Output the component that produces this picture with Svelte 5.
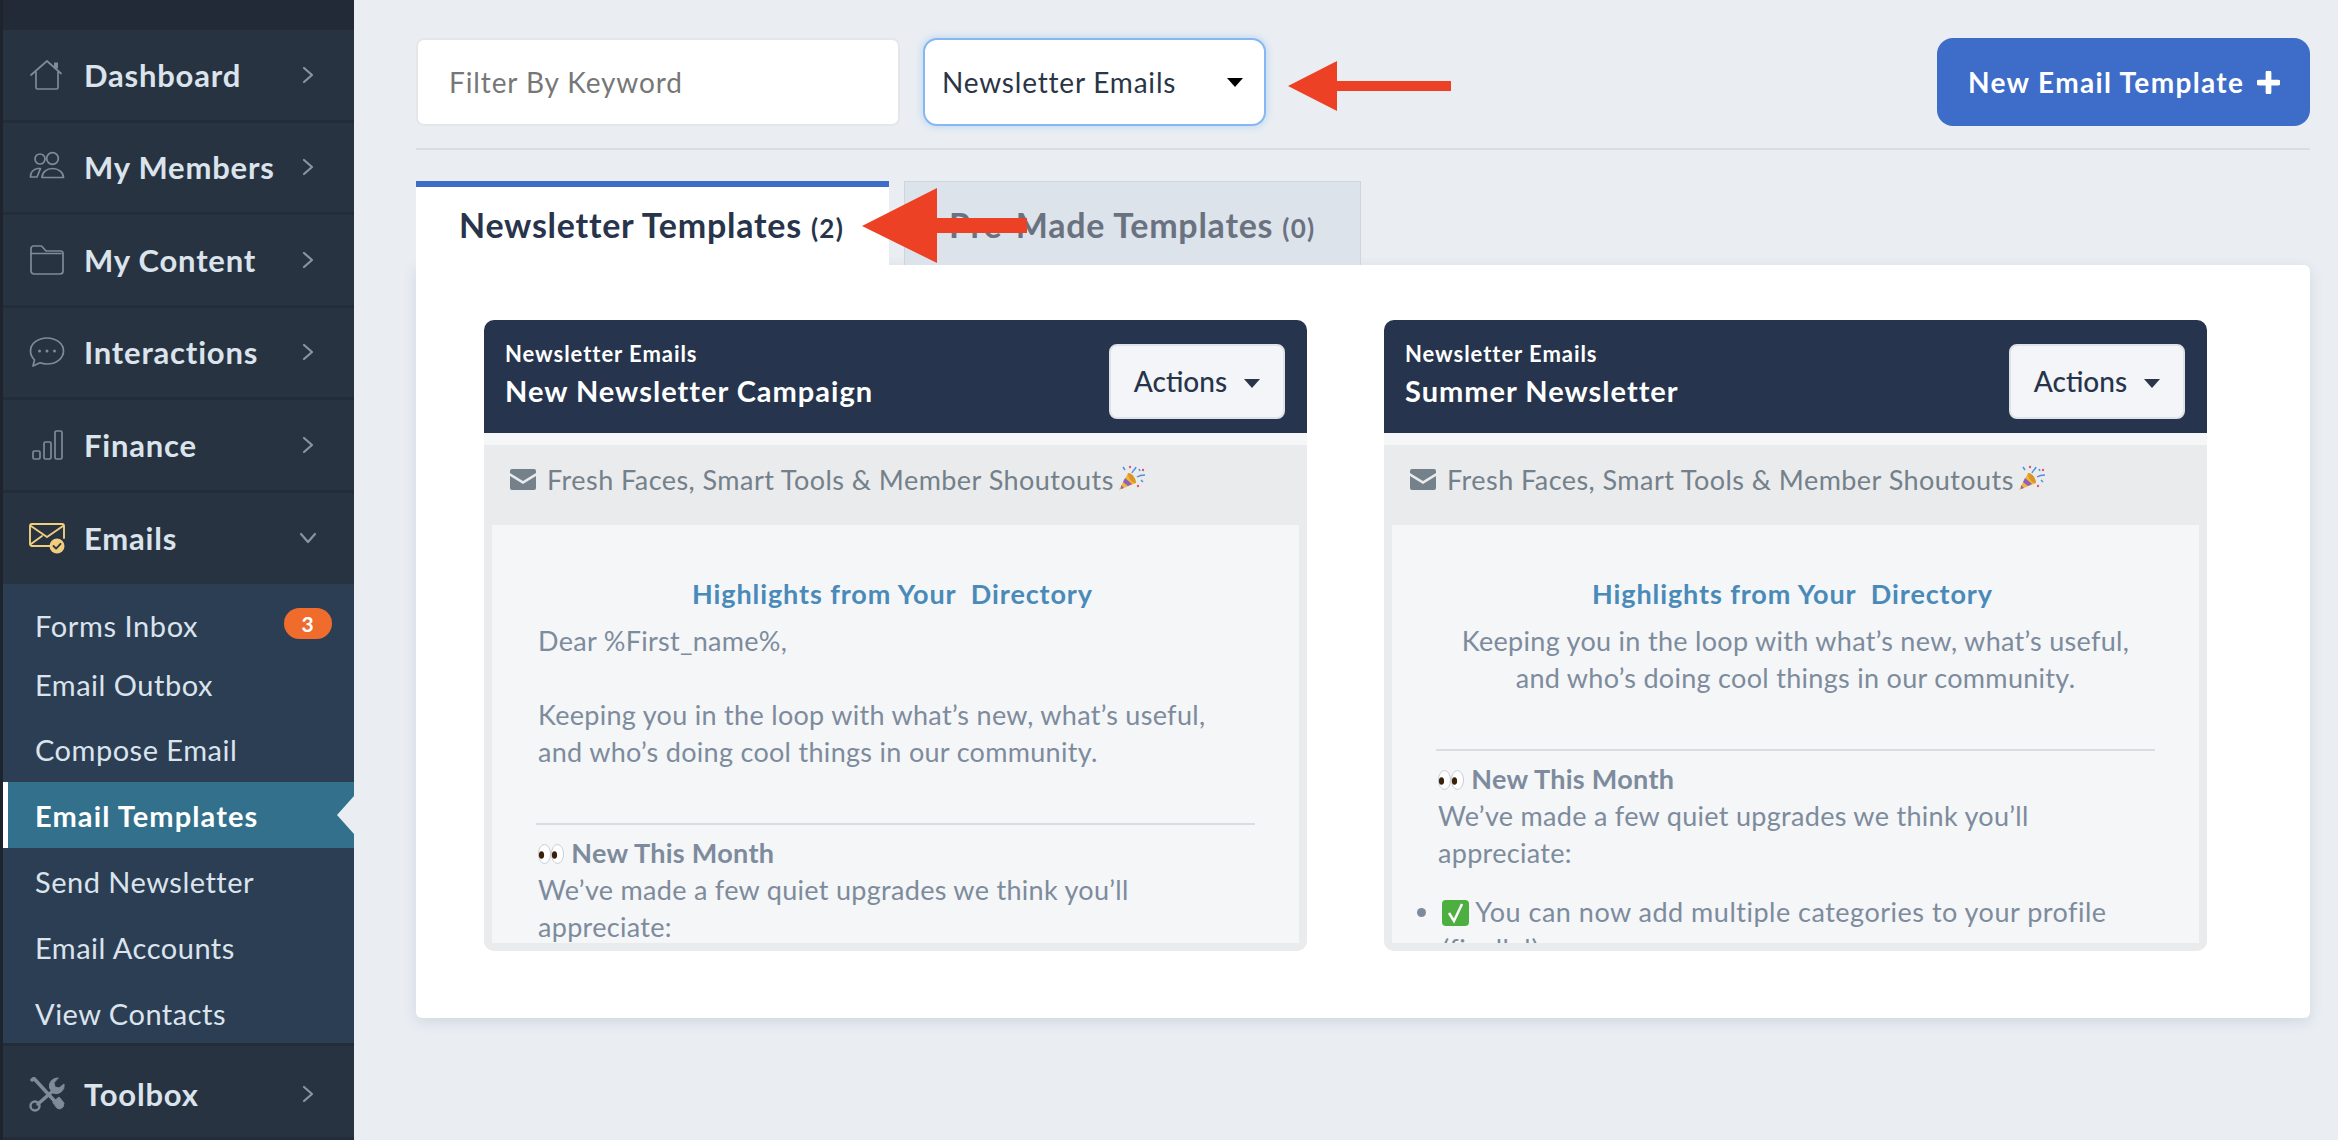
<script>
	const nav = [
		{ label: 'Dashboard', icon: 'home' },
		{ label: 'My Members', icon: 'users' },
		{ label: 'My Content', icon: 'folder' },
		{ label: 'Interactions', icon: 'chat' },
		{ label: 'Finance', icon: 'bars' }
	];
	const sub = ['Email Outbox', 'Compose Email', 'Email Templates', 'Send Newsletter', 'Email Accounts', 'View Contacts'];
	const cards = [
		{ title: 'New Newsletter Campaign', greeting: true },
		{ title: 'Summer Newsletter', greeting: false }
	];
</script>

{#snippet navIcon(name)}
	<svg class="nav-icon" viewBox="0 0 36 32" fill="none" stroke="#7f8b99" stroke-width="1.7" stroke-linecap="round" stroke-linejoin="round">
		{#if name === 'home'}
			<path d="M2 16 18 2l14 12.5" />
			<path d="M7 13v15.5a1.5 1.5 0 0 0 1.5 1.5h19a1.5 1.5 0 0 0 1.5-1.5V13" />
			<path d="M27 3.5v6" stroke-width="4" stroke-linecap="butt" />
		{:else if name === 'users'}
			<circle cx="11" cy="8" r="5" />
			<circle cx="23.5" cy="7.5" r="5.8" />
			<path d="M1.5 26c0-4 2.2-7.5 7-8.5h3L8 26z" />
			<path d="M13 26.5c0-5 4.5-9 10.5-9S34.5 21.5 34.5 26.5z" />
		{:else if name === 'folder'}
			<path d="M2 27V4.5A2.5 2.5 0 0 1 4.5 2h8l4.5 5h15A2.5 2.5 0 0 1 34 9.5V27a3 3 0 0 1-3 3H5a3 3 0 0 1-3-3z" />
			<path d="M2 9.5h30" />
		{:else if name === 'chat'}
			<path d="M18 2c9 0 16.5 5.5 16.5 13S27 28 18 28c-2.5 0-4.8-.3-7-1.2L4 30l1.5-6C3 21.5 1.5 18.5 1.5 15 1.5 7.5 9 2 18 2z" />
			<g fill="#7f8b99" stroke="none"><circle cx="10.5" cy="15" r="1.5" /><circle cx="18" cy="15" r="1.5" /><circle cx="25.5" cy="15" r="1.5" /></g>
		{:else if name === 'bars'}
			<rect x="4" y="22" width="7" height="8" rx="1.5" />
			<rect x="15" y="13" width="7" height="17" rx="1.5" />
			<rect x="26" y="2" width="7" height="28" rx="1.5" />
		{/if}
	</svg>
{/snippet}

{#snippet chevron()}
	<svg class="chev" viewBox="0 0 12 18" fill="none" stroke="#8a95a2" stroke-width="2.2" stroke-linecap="round" stroke-linejoin="round"><path d="M2 2l8 7-8 7" /></svg>
{/snippet}

{#snippet eyes()}
	<svg class="emoji eyes" viewBox="0 0 26 20">
		<ellipse cx="6.5" cy="10" rx="6" ry="9.5" fill="#fff" stroke="#c9ced4" />
		<ellipse cx="19.5" cy="10" rx="6" ry="9.5" fill="#fff" stroke="#c9ced4" />
		<ellipse cx="3.5" cy="11" rx="2.6" ry="3.8" fill="#3a2208" />
		<ellipse cx="16.5" cy="11" rx="2.6" ry="3.8" fill="#3a2208" />
	</svg>
{/snippet}

<div class="page">
	<aside class="sidebar">
		<div class="top"></div>
		{#each nav as item}
			<div class="nav-row">
				{@render navIcon(item.icon)}
				<span class="nav-label">{item.label}</span>
				{@render chevron()}
			</div>
		{/each}
		<div class="nav-row open">
			<svg class="nav-icon" viewBox="0 0 36 32" fill="none" stroke="#f1cd7e" stroke-width="1.9" stroke-linecap="round" stroke-linejoin="round">
				<path d="M24 24H3a2 2 0 0 1-2-2V4a2 2 0 0 1 2-2h30a2 2 0 0 1 2 2v12" />
				<path d="M2 4l16 11L34 4M2 22l11-8" />
				<circle cx="28" cy="24" r="7.5" fill="#f1cd7e" stroke="none" />
				<path d="M24.5 24l2.6 2.6 4.4-4.8" stroke="#2a3644" stroke-width="1.8" />
			</svg>
			<span class="nav-label">Emails</span>
			<svg class="chev down" viewBox="0 0 18 12" fill="none" stroke="#8a95a2" stroke-width="2.2" stroke-linecap="round" stroke-linejoin="round"><path d="M2 2l7 8 7-8" /></svg>
		</div>
		<div class="submenu">
			<div class="sub-first">
				<span>Forms Inbox</span>
				<span class="badge">3</span>
			</div>
			{#each sub as label}
				<div class="sub-item" class:active={label === 'Email Templates'}>{label}</div>
			{/each}
		</div>
		<div class="nav-row last">
			<svg class="nav-icon tools" viewBox="0 0 36 35" fill="none" stroke="#7f8b99" stroke-linecap="round" stroke-linejoin="round">
				<path d="M3 3l2-1.5 21 23" stroke-width="3.5" />
				<path d="M24 25l6-5 5 6-1 4-3 2-3-1z" fill="#7f8b99" stroke-width="1" />
				<path d="M25 13 9 27" stroke-width="3.5" />
				<circle cx="6" cy="29" r="4.5" stroke-width="2.4" />
				<path d="M29 1a8 8 0 0 0-8 11l3 4a8 8 0 0 0 11-9l-5 4-4-1-1-4z" fill="#7f8b99" stroke-width="1" />
			</svg>
			<span class="nav-label">Toolbox</span>
			{@render chevron()}
		</div>
	</aside>

	<main class="main">
		<div class="toolbar">
			<div class="filter">Filter By Keyword</div>
			<div class="select">
				<span>Newsletter Emails</span>
				<i class="caret"></i>
			</div>
			<button class="new-btn">
				New Email Template
				<svg viewBox="0 0 24 24" width="23" height="23"><path d="M12 2v20M2 12h20" stroke="#fff" stroke-width="6" stroke-linecap="round" /></svg>
			</button>
		</div>
		<div class="divider"></div>

		<div class="tabs">
			<div class="tab active">Newsletter Templates <small>(2)</small></div>
			<div class="tab">Pre-Made Templates <small>(0)</small></div>
		</div>

		<section class="panel">
			{#each cards as card}
				<article class="card">
					<header class="card-head">
						<div class="head-text">
							<div class="kind">Newsletter Emails</div>
							<div class="title">{card.title}</div>
						</div>
						<button class="actions">Actions <i class="caret small"></i></button>
					</header>
					<div class="subject">
						<svg class="mail" viewBox="0 0 26 21"><path d="M2 0h22a2 2 0 0 1 2 2v2L13 12 0 4V2a2 2 0 0 1 2-2z" fill="#74808a" /><path d="M0 7l13 8 13-8v12a2 2 0 0 1-2 2H2a2 2 0 0 1-2-2z" fill="#74808a" /></svg>
						<span>Fresh Faces, Smart Tools &amp; Member Shoutouts</span>
						<svg class="emoji popper" viewBox="0 0 27 26">
							<path d="M10 8 1 25l17-7z" fill="#f2b632" />
							<path d="M7 13l7 6-4 2-5-4zM3 20l3 3-3 1z" fill="#8c5fc4" />
							<path d="M10 8c4 0 8 5 8 10-4 0-8-5-8-10z" fill="#d9942a" />
							<path d="M14 8c1-3 3-3 4-6M19 12c3-2 5-2 8-2M5 2l2 3M21 4l1 2M23 15l2 2" fill="none" stroke="#4f8fe0" stroke-width="1.5" />
							<circle cx="12" cy="2" r="1.2" fill="#e0567a" /><circle cx="25" cy="5" r="1.2" fill="#e0567a" /><circle cx="20" cy="21" r="1.2" fill="#e0567a" />
						</svg>
					</div>
					<div class="body">
						<div class="email">
							<h4>Highlights from Your &nbsp;Directory</h4>
							{#if card.greeting}
								<p class="copy">Dear %First_name%,<br /><br />Keeping you in the loop with what’s new, what’s useful,<br />and who’s doing cool things in our community.</p>
							{:else}
								<p class="copy mid">Keeping you in the loop with what’s new, what’s useful,<br />and who’s doing cool things in our community.</p>
							{/if}
							<hr />
							<p class="copy">{@render eyes()} <strong>New This Month</strong><br />We’ve made a few quiet upgrades we think you’ll<br />appreciate:</p>
							{#if !card.greeting}
								<ul>
									<li>
										<svg class="emoji check" viewBox="0 0 27 26"><rect width="27" height="26" rx="4" fill="#4caf3f" /><path d="M7 13l5 8 8-17" fill="none" stroke="#fff" stroke-width="2.5" /></svg>
										You can now add multiple categories to your profile<br />(finally!)
									</li>
								</ul>
							{/if}
						</div>
					</div>
				</article>
			{/each}
		</section>

		<svg class="arrow one" viewBox="0 0 163 50"><path d="M0 25 49 0v20h114v10H49v20z" fill="#ec4125" /></svg>
		<svg class="arrow two" viewBox="0 0 165 75"><path d="M0 38 75 0v30h90v15H75v30z" fill="#ec4125" /></svg>
	</main>
</div>

<style>
	:global(body) {
		background: #eaeef3;
	}

	.page {
		display: flex;
		height: 1140px;
		overflow: hidden;
		font-family: Lato, 'Noto Sans', sans-serif;
	}

	.sidebar {
		flex: 0 0 354px;
		box-sizing: border-box;
		border-left: 3px solid #1d242e;
		background: #283341;
		color: #dbe4ec;
	}

	.top {
		height: 30px;
		background: #222a37;
	}

	.nav-row {
		box-sizing: border-box;
		display: flex;
		align-items: center;
		height: 92.5px;
		padding-left: 26px;
		border-bottom: 3px solid #232c39;
	}

	.nav-row.open {
		height: 91.5px;
		border-bottom: 0;
	}

	.nav-row.last {
		height: 94px;
		padding-top: 5px;
	}

	.nav-icon {
		flex: 0 0 36px;
		height: 32px;
	}

	.nav-icon.tools {
		height: 35px;
	}

	.nav-label {
		margin-left: 19px;
		font-size: 31px;
		font-weight: 700;
		letter-spacing: 0.8px;
	}

	.chev {
		width: 12px;
		height: 18px;
		margin-left: auto;
		margin-right: 40px;
	}

	.chev.down {
		width: 18px;
		height: 12px;
		margin-right: 37px;
	}

	.submenu {
		box-sizing: border-box;
		height: 462px;
		padding-top: 20px;
		background: #2c3e54;
		border-bottom: 3px solid #232c39;
		font-size: 29px;
		color: #dbe4ec;
	}

	.sub-first {
		display: flex;
		justify-content: space-between;
		align-items: center;
		height: 43px;
		margin-bottom: 13px;
		padding: 0 22px 0 32px;
		letter-spacing: 0.6px;
	}

	.badge {
		display: flex;
		align-items: center;
		justify-content: center;
		width: 48px;
		height: 31px;
		margin-top: -4px;
		border-radius: 16px;
		background: #ef6c2c;
		color: #fff;
		font-size: 21px;
		font-weight: 700;
	}

	.sub-item {
		display: flex;
		align-items: center;
		height: 66px;
		padding-left: 32px;
		letter-spacing: 0.5px;
	}

	.sub-first + .sub-item {
		height: 48px;
		margin-bottom: 8px;
	}

	.sub-item.active {
		position: relative;
		padding-left: 27px;
		border-left: 5px solid #fff;
		background: #33708c;
		color: #fff;
		font-weight: 700;
		letter-spacing: 1.1px;
	}

	.sub-item.active::after {
		content: '';
		position: absolute;
		right: 0;
		top: 14px;
		border-style: solid;
		border-width: 19px 17px 19px 0;
		border-color: transparent #eaeef3 transparent transparent;
	}

	.main {
		position: relative;
		flex: 1;
		box-sizing: border-box;
		padding: 38px 28px 0 62px;
	}

	.toolbar {
		display: flex;
		height: 88px;
		gap: 23px;
		font-size: 28px;
	}

	.filter {
		box-sizing: border-box;
		width: 484px;
		padding-left: 31px;
		border: 2px solid #e4e6ea;
		border-radius: 8px;
		background: #fff;
		color: #777;
		line-height: 84px;
		letter-spacing: 0.9px;
	}

	.select {
		box-sizing: border-box;
		display: flex;
		align-items: center;
		justify-content: space-between;
		width: 343px;
		padding: 0 21px 0 17px;
		border: 2px solid #86b7f0;
		border-radius: 14px;
		background: #fff;
		box-shadow: 0 0 6px 2px rgba(134, 183, 240, 0.35);
		color: #2a3547;
		letter-spacing: 0.8px;
	}

	.caret {
		display: block;
		width: 0;
		height: 0;
		border-style: solid;
		border-width: 9px 8.5px 0;
		border-color: #000 transparent transparent;
	}

	.caret.small {
		display: inline-block;
		margin-left: 10px;
		vertical-align: 4px;
		border-width: 9px 8px 0;
		border-color: #2a3547 transparent transparent;
	}

	.new-btn {
		display: flex;
		align-items: center;
		gap: 13px;
		box-sizing: border-box;
		width: 373px;
		margin-left: auto;
		padding: 0 0 0 31px;
		border: 0;
		border-radius: 16px;
		background: #3d6cc9;
		color: #fff;
		font: 700 28px Lato, sans-serif;
		letter-spacing: 1.35px;
	}

	.divider {
		height: 2px;
		margin: 22px 0 31px;
		background: #dcdde1;
	}

	.tabs {
		display: flex;
		gap: 15px;
		height: 84px;
		font-size: 34px;
		font-weight: 700;
	}

	.tab {
		box-sizing: border-box;
		width: 457px;
		padding-top: 22px;
		padding-left: 44px;
		background: #dce3eb;
		border: 1px solid #ccd5e0;
		border-bottom: 0;
		color: #6a7280;
		white-space: nowrap;
		letter-spacing: 0.75px;
	}

	.tab.active {
		width: 473px;
		border: 0;
		border-top: 6px solid #3d6cc9;
		padding-top: 17px;
		padding-left: 43px;
		background: #fff;
		color: #27344a;
	}

	.tab small {
		font-size: 26px;
		letter-spacing: 1.3px;
	}

	.panel {
		display: grid;
		grid-template-columns: 823px 823px;
		gap: 77px;
		box-sizing: border-box;
		height: 753px;
		padding: 55px 103px 0 68px;
		border-radius: 0 6px 6px 6px;
		background: #fff;
		box-shadow: 0 4px 14px rgba(60, 80, 110, 0.14);
	}

	.card {
		display: flex;
		flex-direction: column;
		height: 631px;
		border-radius: 10px;
		background: #f4f6f8;
		overflow: hidden;
	}

	.card-head {
		display: flex;
		align-items: center;
		justify-content: space-between;
		flex: 0 0 113px;
		box-sizing: border-box;
		padding: 0 22px 0 21px;
		background: #26354d;
		color: #fff;
	}

	.head-text {
		padding-bottom: 5px;
	}

	.kind {
		font-size: 22px;
		font-weight: 700;
		line-height: 28px;
		letter-spacing: 0.95px;
	}

	.title {
		margin-top: 5px;
		font-size: 29px;
		font-weight: 700;
		line-height: 36px;
		letter-spacing: 1px;
	}

	.actions {
		box-sizing: border-box;
		width: 176px;
		height: 75px;
		margin-top: 10px;
		padding-bottom: 3px;
		border: 2px solid #dfe2e6;
		border-radius: 8px;
		background: #f3f5f8;
		color: #27344a;
		font: 500 28px Lato, sans-serif;
	}

	.subject {
		display: flex;
		align-items: center;
		flex: 0 0 80px;
		box-sizing: border-box;
		margin-top: 12px;
		padding: 0 0 11px 26px;
		background: #e9ebed;
		color: #74808a;
		font-size: 27px;
		letter-spacing: 0.45px;
	}

	.mail {
		width: 26px;
		height: 21px;
		margin-right: 11px;
	}

	.emoji {
		flex: none;
		display: inline-block;
	}

	.popper {
		width: 27px;
		height: 26px;
		margin: -4px 0 0 4px;
	}

	.eyes {
		width: 26px;
		height: 20px;
		vertical-align: -1px;
	}

	.check {
		width: 27px;
		height: 26px;
		vertical-align: -4px;
	}

	.body {
		flex: 1;
		min-height: 0;
		padding: 0 8px 8px;
		background: #e9ebed;
	}

	.email {
		box-sizing: border-box;
		height: 100%;
		padding: 50px 44px 0 44px;
		background: #f4f6f8;
		overflow: hidden;
		color: #7d8b9c;
		font-size: 27px;
		line-height: 37px;
		letter-spacing: 0.3px;
	}

	h4 {
		margin: 0 0 9px;
		padding-right: 6px;
		color: #4a8ab8;
		font-size: 27px;
		font-weight: 700;
		line-height: 38px;
		text-align: center;
		letter-spacing: 0.9px;
	}

	.copy {
		margin: 0;
		padding-left: 2px;
	}

	.copy.mid {
		padding-left: 0;
		text-align: center;
	}

	hr {
		height: 2px;
		margin: 53px 0 9px;
		border: 0;
		background: #d9dce0;
	}

	ul {
		margin: 22px 0 0;
		padding-left: 6px;
		letter-spacing: 0.5px;
	}

	.arrow {
		position: absolute;
	}

	.arrow.one {
		left: 934px;
		top: 61px;
		width: 163px;
		height: 50px;
	}

	.arrow.two {
		left: 508px;
		top: 188px;
		width: 165px;
		height: 75px;
	}
</style>
